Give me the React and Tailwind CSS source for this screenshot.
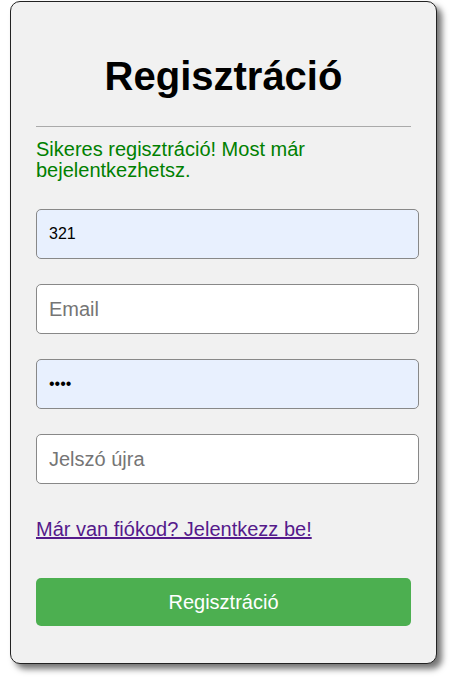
export default function App() {
  return (
    <div className="min-h-screen bg-white pl-[10px] pt-[1px] font-['Liberation_Sans',Arial,sans-serif]">
      <div className="w-[427px] rounded-[10px] border border-[#222] bg-[#f1f1f1] px-[25px] pb-[37px] shadow-[5px_5px_6px_rgba(0,0,0,0.55)]">
        <h1 className="mt-[51px] text-center text-[40px] font-bold leading-[46px] text-black">
          Regisztráció
        </h1>
        <hr className="mt-[27px] border-0 border-t border-[#aaa]" />
        <p className="mt-[12px] text-[20px] leading-[21px] text-[#008000]">
          Sikeres regisztráció! Most már bejelentkezhetsz.
        </p>

        <div className="mt-[28px] flex flex-col gap-[25px]">
          <input
            type="text"
            defaultValue="321"
            className="h-[50px] w-[383px] rounded-[5px] border border-[#888] bg-[#e8f0fe] pl-[12px] text-[16px] text-black outline-none"
          />
          <input
            type="email"
            placeholder="Email"
            className="h-[50px] w-[383px] rounded-[5px] border border-[#888] bg-white pl-[12px] text-[20px] text-black outline-none placeholder:text-[#757575]"
          />
          <input
            type="password"
            defaultValue="1234"
            className="h-[50px] w-[383px] rounded-[5px] border border-[#888] bg-[#e8f0fe] pl-[12px] text-[16px] text-black outline-none"
          />
          <input
            type="password"
            placeholder="Jelszó újra"
            className="h-[50px] w-[383px] rounded-[5px] border border-[#888] bg-white pl-[12px] text-[20px] text-black outline-none placeholder:text-[#757575]"
          />
        </div>

        <div className="mt-[34px] text-[20px] leading-[23px]">
          <a href="#" className="text-[#551a8b] underline">
            Már van fiókod? Jelentkezz be!
          </a>
        </div>

        <button className="mt-[37px] h-[48px] w-full rounded-[5px] bg-[#4caf50] text-[20px] text-white">
          Regisztráció
        </button>
      </div>
    </div>
  )
}
